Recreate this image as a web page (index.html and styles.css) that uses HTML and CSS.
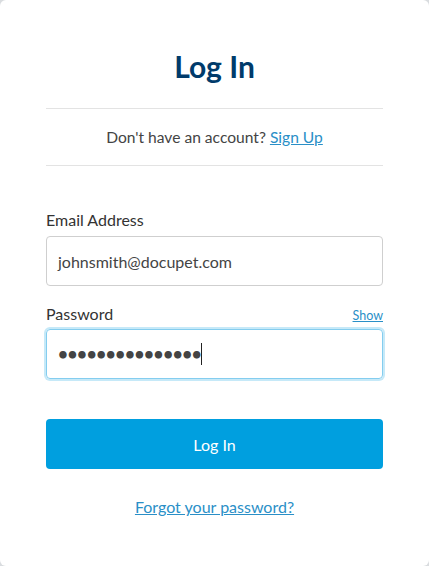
FILE: index.html
```html
<!DOCTYPE html>
<html lang="en">
<head>
<meta charset="utf-8">
<title>Log In</title>
<link rel="stylesheet" href="styles.css">
</head>
<body>
<main class="card">
  <h1 class="title">Log In</h1>
  <div class="signup">Don't have an account? <a href="#" class="link">Sign Up</a></div>
  <form class="form">
    <div class="label-row"><label class="label">Email Address</label></div>
    <div class="field">johnsmith@docupet.com</div>
    <div class="label-row pw-row"><label class="label">Password</label><a href="#" class="show">Show</a></div>
    <div class="field focused"><span class="dots">•••••••••••••••</span><span class="caret"></span></div>
    <button type="button" class="btn">Log In</button>
  </form>
  <div class="forgot"><a href="#" class="link">Forgot your password?</a></div>
</main>
</body>
</html>
```
FILE: styles.css
```css
html, body {
  margin: 0;
  padding: 0;
  background: #d9dcdf;
  height: 100%;
}
body {
  font-family: Lato, "Open Sans", Arial, sans-serif;
  color: #444;
}
.card {
  box-sizing: border-box;
  height: 566px;
  background: #fff;
  border-radius: 6px;
  padding: 48px 46px 0;
}
.title {
  margin: 0;
  font-size: 30px;
  line-height: 36px;
  font-weight: 700;
  color: #003b6b;
  text-align: center;
  padding-bottom: 24px;
  border-bottom: 1px solid #e3e3e3;
}
.signup {
  font-size: 15.6px;
  line-height: 20px;
  text-align: center;
  padding: 18px 0;
  border-bottom: 1px solid #e3e3e3;
}
.link {
  color: #2a8fc7;
  text-decoration: underline;
}
.form {
  padding-top: 44px;
  display: flex;
  flex-direction: column;
}
.label-row {
  display: flex;
  justify-content: space-between;
  align-items: baseline;
  margin-bottom: 6px;
}
.pw-row {
  margin-top: 18px;
  margin-bottom: 5px;
}
.label {
  font-size: 16px;
  line-height: 20px;
  color: #333;
}
.show {
  font-size: 12.5px;
  color: #2a8fc7;
  text-decoration: underline;
}
.field {
  box-sizing: border-box;
  height: 50px;
  border: 1px solid #cfcfcf;
  border-radius: 4px;
  padding: 0 11px;
  display: flex;
  align-items: center;
  font-size: 16px;
  color: #444;
}
.field.focused {
  border-color: #84cdef;
  box-shadow: 0 0 0 2px #c6e9f8;
}
.dots {
  font-size: 17px;
  font-weight: 700;
  letter-spacing: -0.3px;
  color: #444;
  line-height: 20px;
}
.caret {
  display: inline-block;
  width: 1px;
  height: 22px;
  background: #222;
  margin-left: 0;
}
.btn {
  margin-top: 40px;
  height: 50px;
  border: 0;
  border-radius: 4px;
  background: #009fdf;
  color: #fff;
  font-family: inherit;
  font-size: 16px;
}
.forgot {
  margin-top: 28px;
  text-align: center;
  font-size: 16px;
  line-height: 20px;
}
```
